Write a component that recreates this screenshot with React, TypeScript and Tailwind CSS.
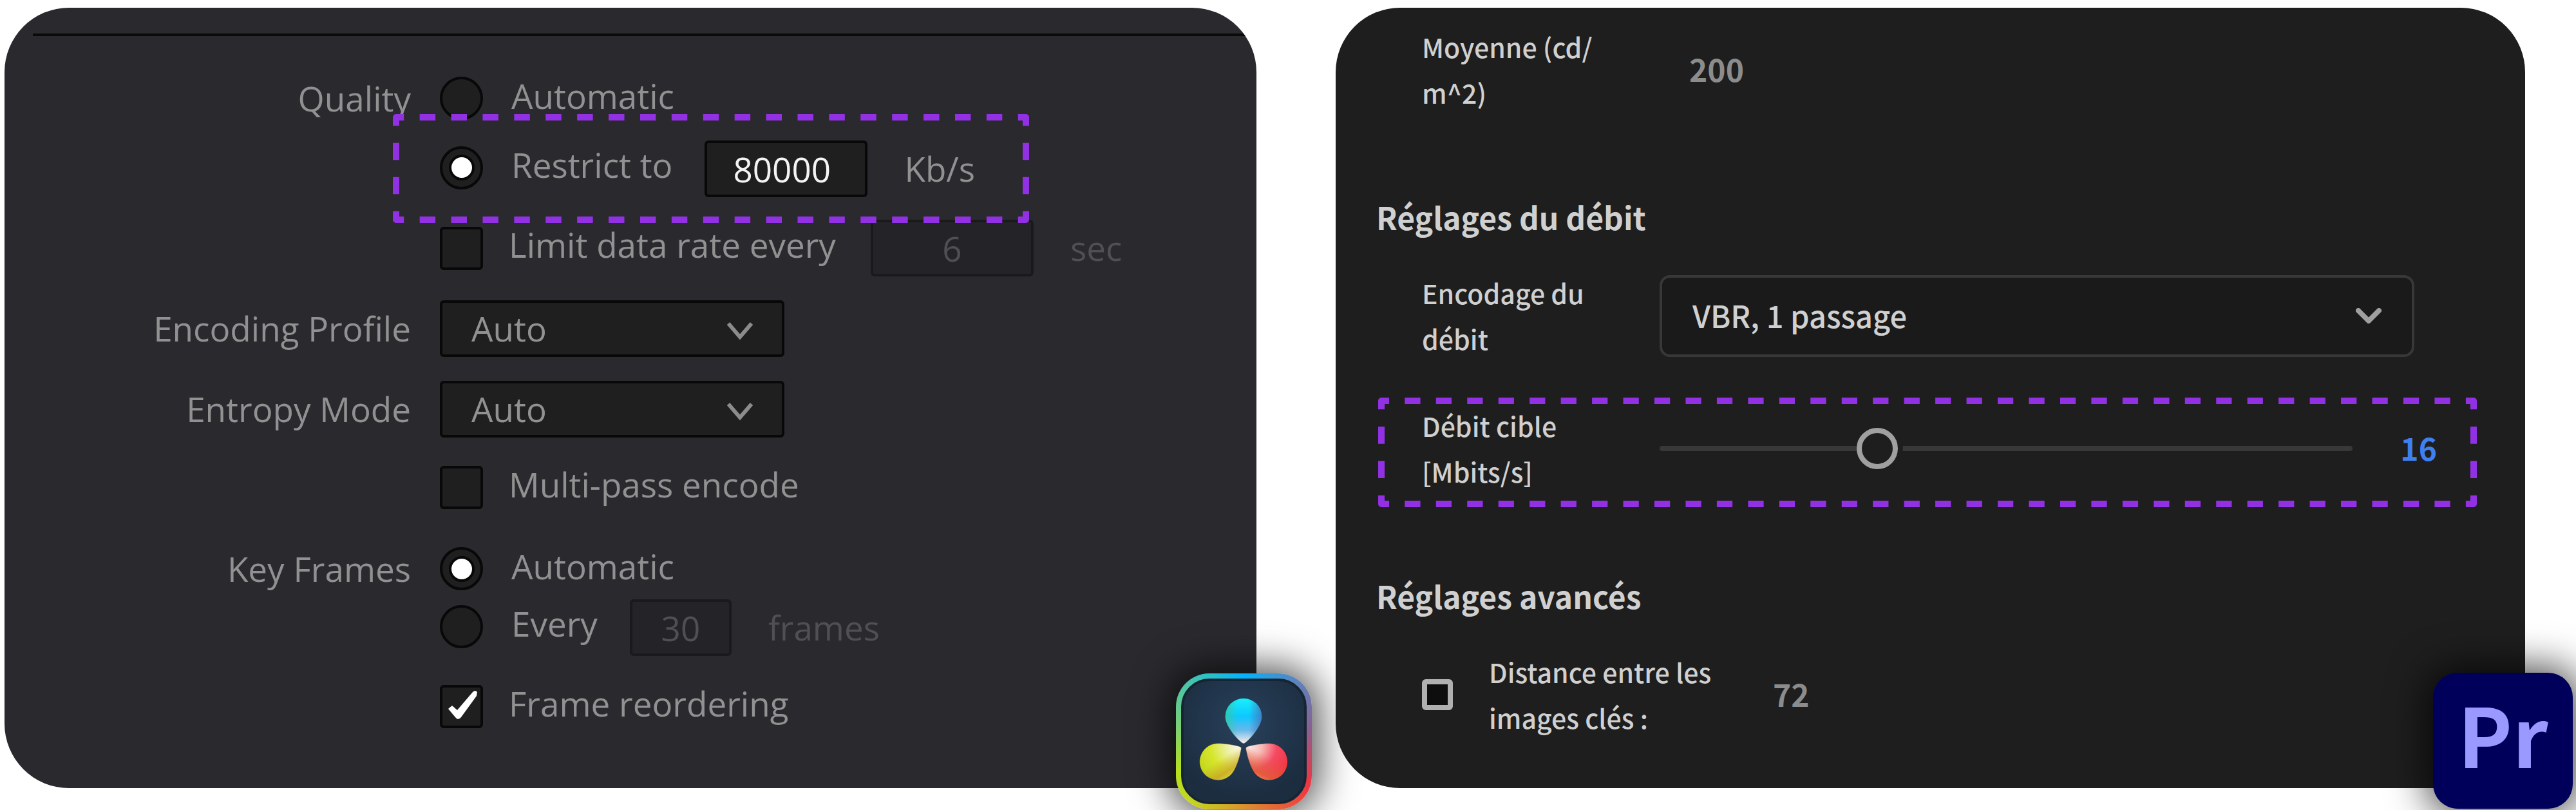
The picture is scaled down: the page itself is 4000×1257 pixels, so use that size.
import React, { useState } from 'react';
import clsx from 'clsx';

interface HighlightProps {
  width: number;
  height: number;
  className?: string;
}

// Purple dashed frame, every corner carries half a dash on each side
const Highlight: React.FC<HighlightProps> = ({ width, height, className }) => {
  const stroke = 10;
  const inset = stroke / 2;
  const innerW = width - stroke;
  const innerH = height - stroke;
  const dashX = innerW / Math.round(innerW / 49) / 2;
  const dashY = innerH / Math.round(innerH / 53) / 2;
  const right = width - inset;
  const bottom = height - inset;
  const rows = [inset, bottom];
  const cols = [inset, right];

  return (
    <svg
      width={width}
      height={height}
      viewBox={`0 0 ${width} ${height}`}
      fill="none"
      stroke="#9231e4"
      strokeWidth={stroke}
      strokeLinejoin="round"
      aria-hidden="true"
      className={clsx('pointer-events-none absolute', className)}
    >
      {rows.map((y) => (
        <path key={y} d={`M${inset} ${y}H${right}`} strokeDasharray={dashX} strokeDashoffset={dashX / 2} />
      ))}
      {cols.map((x) => (
        <path key={x} d={`M${x} ${inset}V${bottom}`} strokeDasharray={dashY} strokeDashoffset={dashY / 2} />
      ))}
      <path d={`M${inset} 16V${inset}H16`} />
      <path d={`M${right} 16V${inset}H${width - 16}`} />
      <path d={`M${inset} ${height - 16}V${bottom}H16`} />
      <path d={`M${right} ${height - 16}V${bottom}H${width - 16}`} />
    </svg>
  );
};

/* ---------- DaVinci Resolve ---------- */

interface RowProps {
  label?: string;
  htmlFor?: string;
  className?: string;
  children: React.ReactNode;
}

const ResolveRow: React.FC<RowProps> = ({ label, htmlFor, className, children }) => (
  <div className={clsx('relative flex items-center', className)}>
    <div className="mr-[45px] w-[631px] shrink-0 text-right">
      {htmlFor ? <label htmlFor={htmlFor}>{label}</label> : label}
    </div>
    {children}
  </div>
);

interface RadioProps {
  name: string;
  label: string;
  checked: boolean;
  onChange: () => void;
}

const ResolveRadio: React.FC<RadioProps> = ({ name, label, checked, onChange }) => (
  <label className="flex items-center gap-11">
    <span className="grid place-items-center">
      <input
        type="radio"
        name={name}
        checked={checked}
        onChange={onChange}
        className="col-start-1 row-start-1 size-[67px] appearance-none rounded-full border-4 border-[#080808] bg-[#1f1f1f]"
      />
      {checked && (
        <span className="pointer-events-none col-start-1 row-start-1 size-10 rounded-full border-4 border-[#080808] bg-white" />
      )}
    </span>
    <span className="pb-2">{label}</span>
  </label>
);

interface CheckboxProps {
  label: string;
  checked: boolean;
  onChange: () => void;
}

const ResolveCheckbox: React.FC<CheckboxProps> = ({ label, checked, onChange }) => (
  <label className="flex items-center gap-10">
    <span className="grid place-items-center">
      <input
        type="checkbox"
        checked={checked}
        onChange={onChange}
        className="col-start-1 row-start-1 size-[67px] appearance-none rounded-md border-4 border-[#080808] bg-[#1f1f1f]"
      />
      {checked && (
        <svg viewBox="0 0 67 67" className="pointer-events-none col-start-1 row-start-1 size-[67px]" aria-hidden="true">
          <path d="M13 37L19 32L27 39L51 11Q55 7 58 11L57 17L33 50Q28 56 24 50Z" fill="#fff" />
        </svg>
      )}
    </span>
    <span className="pb-2.5">{label}</span>
  </label>
);

const ResolveSelect: React.FC<{ id: string }> = ({ id }) => (
  <div className="grid items-center">
    <select
      id={id}
      className="col-start-1 row-start-1 h-[88px] w-[535px] appearance-none rounded-md border-4 border-[#080808] bg-[#1f1f1f] pl-[45px]"
    >
      <option>Auto</option>
    </select>
    <svg
      viewBox="0 0 40 28"
      fill="none"
      stroke="#8c8c8c"
      strokeWidth="6"
      className="pointer-events-none col-start-1 row-start-1 mt-2 mr-[49px] h-7 w-10 justify-self-end"
      aria-hidden="true"
    >
      <path d="M2 2L20 23L38 2" />
    </svg>
  </div>
);

const ResolveLogo = () => (
  <div className="absolute -right-[86px] -bottom-[33px] size-[211px] rounded-[52px] bg-[conic-gradient(#00b4ff_0deg,#5f82ba_42deg,#8a5f90_80deg,#f03540_125deg,#e4603a_150deg,#d99a2c_185deg,#c4d420_220deg,#b8e01c_245deg,#7fd070_280deg,#40c4b0_320deg,#00b4ff_360deg)] p-2 shadow-[0_0_60px_10px_rgba(0,0,0,0.7)]">
    <div className="size-full rounded-[44px] border-4 border-[#162534] bg-[radial-gradient(circle_at_50%_35%,#28415b,#1c2d40_75%)]">
      <svg viewBox="12 12 187 187" className="size-full" role="img" aria-label="DaVinci Resolve">
        <defs>
          <linearGradient id="petal-top" x1="0" y1="0" x2="0" y2="1">
            <stop offset="0" stopColor="#18f0fb" />
            <stop offset="0.4" stopColor="#0cc8ff" />
            <stop offset="0.7" stopColor="#66b8ea" />
            <stop offset="1" stopColor="#fff0ea" />
          </linearGradient>
          <linearGradient id="petal-top-edge" x1="0" y1="0" x2="1" y2="0">
            <stop offset="0" stopColor="#38c8a0" stopOpacity="0.8" />
            <stop offset="0.35" stopColor="#38c8a0" stopOpacity="0" />
            <stop offset="0.65" stopColor="#4a70b8" stopOpacity="0" />
            <stop offset="1" stopColor="#4a70b8" stopOpacity="0.8" />
          </linearGradient>
          <radialGradient id="petal-left" cx="0.95" cy="0.08" r="1.15">
            <stop offset="0" stopColor="#fbf8ee" />
            <stop offset="0.25" stopColor="#eef0a8" />
            <stop offset="0.6" stopColor="#d6e62c" />
            <stop offset="1" stopColor="#c0d41c" />
          </radialGradient>
          <linearGradient id="petal-left-edge" x1="0.4" y1="0.5" x2="0.75" y2="1">
            <stop offset="0" stopColor="#d0a028" stopOpacity="0" />
            <stop offset="0.6" stopColor="#c89c28" stopOpacity="0.7" />
            <stop offset="1" stopColor="#e4e040" stopOpacity="0.8" />
          </linearGradient>
          <radialGradient id="petal-right" cx="0.05" cy="0.08" r="1.15">
            <stop offset="0" stopColor="#fbeeea" />
            <stop offset="0.3" stopColor="#f6b8b4" />
            <stop offset="0.6" stopColor="#f44a62" />
            <stop offset="1" stopColor="#f0343c" />
          </radialGradient>
          <linearGradient id="petal-right-edge" x1="0.6" y1="0.4" x2="0.25" y2="1">
            <stop offset="0" stopColor="#e4603a" stopOpacity="0" />
            <stop offset="0.7" stopColor="#e0603a" stopOpacity="0.8" />
            <stop offset="1" stopColor="#f49a58" stopOpacity="0.9" />
          </linearGradient>
        </defs>
        {[
          { id: 'petal-top', d: 'M105 109C101 109 76.5 84 76.5 67A28.5 28.5 0 1 1 133.5 67C133.5 84 109 109 105 109Z' },
          { id: 'petal-left', d: 'M64 108.6C78 108.6 90 111 99 113.5Q102 114.5 101.5 117C99 130 96 140 90 151A28.5 28.5 0 1 1 64 108.6Z' },
          { id: 'petal-right', d: 'M146 108.6C132 108.6 120 111 111 113.5Q108 114.5 108.5 117C111 130 114 140 120 151A28.5 28.5 0 1 0 146 108.6Z' },
        ].map((petal) => (
          <g key={petal.id}>
            <path d={petal.d} fill={`url(#${petal.id})`} stroke="#14202c" strokeOpacity="0.5" />
            <path d={petal.d} fill={`url(#${petal.id}-edge)`} />
          </g>
        ))}
      </svg>
    </div>
  </div>
);

const fieldClass = 'h-[88px] rounded-md border-4 text-center';
const disabledField = 'border-[#1a1a1c] bg-[#242327] text-[#505053]';

const ResolvePanel = () => {
  const [quality, setQuality] = useState('restrict');
  const [keyFrames, setKeyFrames] = useState('auto');
  const [limitRate, setLimitRate] = useState(false);
  const [multiPass, setMultiPass] = useState(false);
  const [reordering, setReordering] = useState(true);
  const [bitrate, setBitrate] = useState('80000');

  return (
    <section className="relative font-['Open_Sans',sans-serif] text-[53px] leading-[56px] text-[#919191]">
      <div className="overflow-hidden rounded-[100px] bg-[#2a292e] pt-10 pb-[93px]">
        <div className="ml-11 h-1 bg-[#0a0a0a]" />
        <ResolveRow label="Quality" className="mt-[63px]">
          <ResolveRadio name="quality" label="Automatic" checked={quality === 'auto'} onChange={() => setQuality('auto')} />
        </ResolveRow>
        <ResolveRow className="z-10 mt-8">
          <div className="pb-1">
            <ResolveRadio
              name="quality"
              label="Restrict to"
              checked={quality === 'restrict'}
              onChange={() => setQuality('restrict')}
            />
          </div>
          <input
            type="text"
            aria-label="Bitrate"
            value={bitrate}
            onChange={(e) => setBitrate(e.target.value)}
            className="ml-[50px] h-[88px] w-[253px] rounded-md border-4 border-[#080808] bg-[#1f1f1f] pl-10 text-[#f4f4f4]"
          />
          <span className="ml-[57px]">Kb/s</span>
          <Highlight width={988} height={169} className="-top-[41px] left-[603px]" />
        </ResolveRow>
        <ResolveRow className="mt-[35px]">
          <ResolveCheckbox label="Limit data rate every" checked={limitRate} onChange={() => setLimitRate(!limitRate)} />
          <input
            type="text"
            aria-label="Data rate interval"
            defaultValue="6"
            disabled={!limitRate}
            className={clsx(fieldClass, disabledField, 'ml-[54px] w-[253px]')}
          />
          <span className="ml-[57px] text-[#505053]">sec</span>
        </ResolveRow>
        <ResolveRow label="Encoding Profile" htmlFor="encoding-profile" className="mt-[37px]">
          <ResolveSelect id="encoding-profile" />
        </ResolveRow>
        <ResolveRow label="Entropy Mode" htmlFor="entropy-mode" className="mt-[37px]">
          <ResolveSelect id="entropy-mode" />
        </ResolveRow>
        <ResolveRow className="mt-11">
          <ResolveCheckbox label="Multi-pass encode" checked={multiPass} onChange={() => setMultiPass(!multiPass)} />
        </ResolveRow>
        <ResolveRow label="Key Frames" className="mt-[59px]">
          <ResolveRadio name="keyframes" label="Automatic" checked={keyFrames === 'auto'} onChange={() => setKeyFrames('auto')} />
        </ResolveRow>
        <ResolveRow className="mt-3.5">
          <div className="pb-1">
            <ResolveRadio name="keyframes" label="Every" checked={keyFrames === 'every'} onChange={() => setKeyFrames('every')} />
          </div>
          <input
            type="text"
            aria-label="Key frame interval"
            defaultValue="30"
            disabled={keyFrames !== 'every'}
            className={clsx(fieldClass, disabledField, 'ml-[50px] w-[158px]')}
          />
          <span className="ml-[57px] text-[#505053]">frames</span>
        </ResolveRow>
        <ResolveRow className="mt-[45px]">
          <ResolveCheckbox label="Frame reordering" checked={reordering} onChange={() => setReordering(!reordering)} />
        </ResolveRow>
      </div>
      <ResolveLogo />
    </section>
  );
};

/* ---------- Premiere Pro ---------- */

const valueClass = 'pb-1 text-[48px] font-bold';

const PremierePanel = () => {
  const [rate, setRate] = useState(16);
  const [customDistance, setCustomDistance] = useState(false);

  return (
    <section className="relative font-['Noto_Sans_CJK_SC',sans-serif] text-[41px] leading-[71px] font-medium text-[#d0d0d0]">
      <div className="rounded-[100px] bg-[#1e1e1e] pt-[25px] pb-[74px]">
        <div className="flex items-center pl-[134px]">
          <div className="w-[415px]">
            Moyenne (cd/
            <br />
            m^2)
          </div>
          <span className={clsx(valueClass, 'text-[#8c8c8c]')}>200</span>
        </div>

        <h2 className="mt-[121px] pl-[63px] text-[48px] leading-[72px] font-bold">Réglages du débit</h2>
        <div className="mt-[47px] flex items-center pr-[172px] pl-[134px]">
          <label htmlFor="rate-control" className="w-[369px] shrink-0">
            Encodage du
            <br />
            débit
          </label>
          <div className="grid flex-1 items-center">
            <select
              id="rate-control"
              className="col-start-1 row-start-1 h-[127px] w-full appearance-none rounded-2xl border-4 border-[#383838] bg-[#1a1a1a] pb-1 pl-[47px] text-[47px]"
            >
              <option>VBR, 1 passage</option>
            </select>
            <svg
              viewBox="0 0 40 24"
              fill="none"
              stroke="#a0a0a0"
              strokeWidth="8"
              strokeLinecap="round"
              strokeLinejoin="round"
              className="pointer-events-none col-start-1 row-start-1 mr-[51px] h-6 w-10 justify-self-end"
              aria-hidden="true"
            >
              <path d="M4 4L20 20L36 4" />
            </svg>
          </div>
        </div>

        <div className="relative mt-16 flex items-center pr-[137px] pl-[134px]">
          <label htmlFor="target-rate" className="w-[369px] shrink-0">
            Débit cible
            <br />
            [Mbits/s]
          </label>
          <input
            id="target-rate"
            type="range"
            min={0}
            max={53}
            value={rate}
            onChange={(e) => setRate(Number(e.target.value))}
            className="h-2 flex-1 appearance-none rounded-full bg-[#383838] [&::-webkit-slider-thumb]:size-16 [&::-webkit-slider-thumb]:appearance-none [&::-webkit-slider-thumb]:rounded-full [&::-webkit-slider-thumb]:border-8 [&::-webkit-slider-thumb]:border-solid [&::-webkit-slider-thumb]:border-[#a0a0a0] [&::-webkit-slider-thumb]:bg-[#1e1e1e] [&::-webkit-slider-thumb]:shadow-[8px_0_0_0_#1e1e1e]"
          />
          <output htmlFor="target-rate" className={clsx(valueClass, 'w-[131px] text-right text-[#3f80f0]')}>
            {rate}
          </output>
          <Highlight width={1706} height={170} className="-top-2 left-[66px]" />
        </div>

        <h2 className="mt-[121px] pl-[63px] text-[48px] leading-[72px] font-bold">Réglages avancés</h2>
        <div className="mt-[47px] flex items-center pl-[134px]">
          <label className="flex w-[545px] items-center gap-14">
            <input
              type="checkbox"
              checked={customDistance}
              onChange={() => setCustomDistance(!customDistance)}
              className="size-12 shrink-0 appearance-none rounded-md border-8 border-[#b0b0b0] bg-[#0e0e0e] checked:bg-[#b0b0b0]"
            />
            <span>
              Distance entre les
              <br />
              images clés :
            </span>
          </label>
          <span className={clsx(valueClass, 'text-[#8c8c8c]')}>72</span>
        </div>
      </div>
      <div className="absolute -right-[74px] -bottom-8 flex h-[211px] w-[217px] items-center justify-center rounded-[38px] bg-[#00005b] pb-6 text-[127px] leading-none font-bold text-[#9999ff] shadow-[0_0_60px_10px_rgba(0,0,0,0.7)]">
        Pr
      </div>
    </section>
  );
};

export default function App() {
  return (
    <main className="grid grid-cols-[1944fr_1847fr] gap-[123px] overflow-hidden bg-white pt-3 pr-[79px] pb-[34px] pl-[7px]">
      <ResolvePanel />
      <PremierePanel />
    </main>
  );
}
